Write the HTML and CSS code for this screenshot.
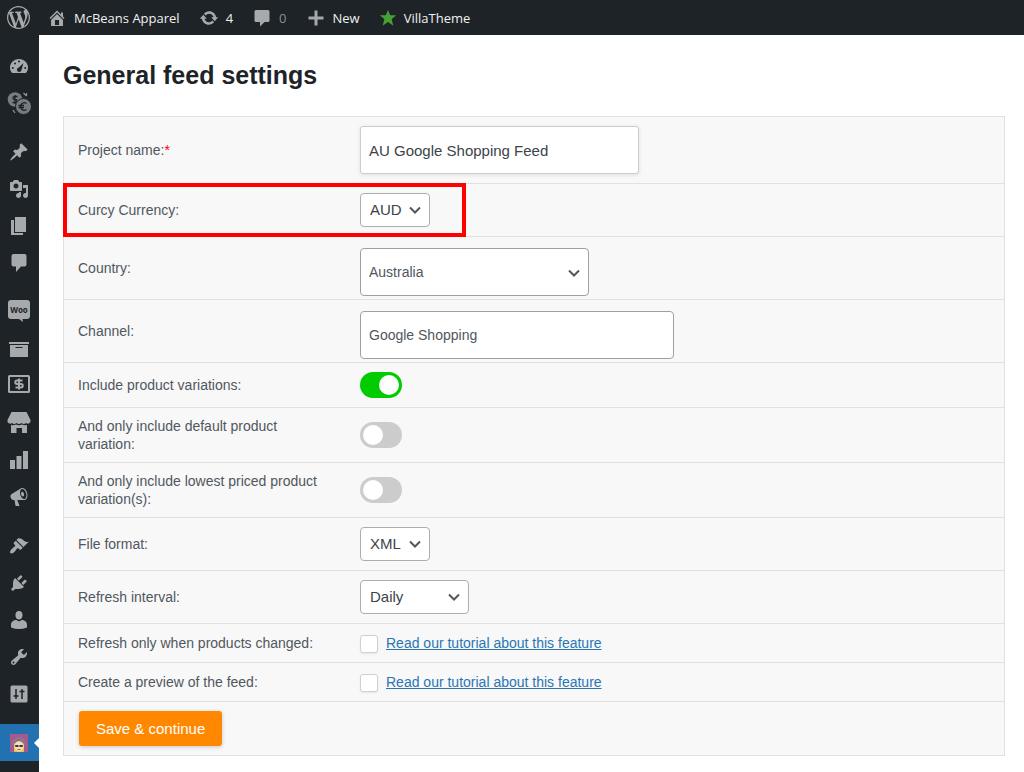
FILE: index.html
```html
<!DOCTYPE html>
<html lang="en">
<head>
<meta charset="utf-8">
<title>General feed settings</title>
<link rel="stylesheet" href="styles.css">
</head>
<body>
<header class="adminbar">
  <a class="bar-item bar-logo" href="#" aria-label="About WordPress"><svg class="logo" viewBox="0 0 20 20"><path d="M20 10c0-5.51-4.49-10-10-10C4.48 0 0 4.49 0 10c0 5.52 4.48 10 10 10 5.51 0 10-4.48 10-10zM7.78 15.37L4.37 6.22c.55-.02 1.17-.08 1.17-.08.5-.06.44-1.13-.06-1.11 0 0-1.45.11-2.37.11-.18 0-.37 0-.58-.01C4.12 2.69 6.87 1.11 10 1.11c2.33 0 4.45.87 6.05 2.34-.68-.11-1.65.39-1.65 1.58 0 .74.45 1.36.9 2.1.35.61.55 1.36.55 2.46 0 1.49-1.4 5-1.4 5l-3.03-8.37c.54-.02.82-.17.82-.17.5-.05.44-1.25-.06-1.22 0 0-1.44.12-2.38.12-.87 0-2.33-.12-2.33-.12-.5-.03-.56 1.2-.06 1.22l.92.08 1.26 3.41zM17.41 10c.24-.64.74-1.87.43-4.25.7 1.29 1.05 2.71 1.05 4.25 0 3.29-1.73 6.24-4.4 7.78.97-2.59 1.94-5.2 2.92-7.78zM6.1 18.09C3.12 16.65 1.11 13.53 1.11 10c0-1.3.23-2.48.72-3.59C3.25 10.3 4.67 14.2 6.1 18.09zm4.03-6.63l2.58 6.98c-.86.29-1.76.45-2.71.45-.79 0-1.57-.11-2.29-.33.81-2.38 1.62-4.74 2.42-7.1z"/></svg></a>
  <a class="bar-item" href="#"><svg viewBox="0 0 20 20"><path fill-rule="evenodd" d="M16 8.5l1.53 1.53-1.06 1.06L10 4.6l-6.47 6.49-1.06-1.06L10 2.5l4 4v-2h2v4zm-6-2.46l6 5.99V18H4v-5.97zM12 17v-5H8v5h4z"/></svg>McBeans Apparel</a>
  <a class="bar-item" href="#"><svg viewBox="0 0 20 20"><path d="M10.2 3.28c3.53 0 6.43 2.61 6.92 6h2.08l-3.5 4-3.5-4h2.32c-.45-1.97-2.21-3.45-4.32-3.45-1.45 0-2.73.71-3.54 1.78L4.95 5.66C6.23 4.2 8.11 3.28 10.2 3.28zm-.4 13.44c-3.52 0-6.43-2.61-6.92-6H.8l3.5-4c1.17 1.33 2.33 2.67 3.5 4H5.48c.45 1.97 2.21 3.45 4.32 3.45 1.45 0 2.73-.71 3.54-1.78l1.71 1.95c-1.28 1.46-3.15 2.38-5.25 2.38z"/></svg>4</a>
  <a class="bar-item bar-muted" href="#"><svg viewBox="0 0 20 20"><path d="M4 2h12q1.500 0 1.500 1.500v9q0 1.500-1.500 1.500h-3.500L8 18.500V14H4q-1.500 0-1.500-1.500v-9Q2.500 2 4 2z"/></svg>0</a>
  <a class="bar-item" href="#"><svg viewBox="0 0 20 20"><path d="M17.500 8.500v3h-6v6h-3v-6h-6v-3h6v-6h3v6z"/></svg>New</a>
  <a class="bar-item bar-star" href="#"><svg viewBox="0 0 20 20"><path d="M10 1l2.600 6H19l-5 4.400L16 18.500l-6-4-6 4 2-7.100L1 7h6.400z"/></svg>VillaTheme</a>
</header>
<div class="shell">
  <nav class="sidebar" aria-label="Main menu">
    <ul>
      <li><a href="#" aria-label="Dashboard"><svg viewBox="0 0 20 20"><path fill-rule="evenodd" d="M3.200 17h13.600c1.300-1.370 2.200-3.110 2.200-5.500 0-4.420-4-8.500-9-8.500s-9 4.080-9 8.500c0 2.390.9 4.130 2.200 5.500zM9 5.500a1 1 0 1 1 2 0 1 1 0 0 1-2 0zM5 7.500a1 1 0 1 1 2 0 1 1 0 0 1-2 0zM14.500 7l-2 7a2.300 2.300 0 1 1-2.700-2.500zM2.800 12a1 1 0 1 1 2 0 1 1 0 0 1-2 0zM15.200 12a1 1 0 1 1 2 0 1 1 0 0 1-2 0z"/></svg></a></li>
      <li><a class="dim" href="#" aria-label="Curcy"><svg class="wide" viewBox="0 0 24 24"><circle cx="8" cy="8.500" r="7.300"/><path d="M10.500 5.500H7.500a1.500 1.500 0 0 0 0 3h1a1.500 1.500 0 0 1 0 3H5.500M8 4v9" fill="none" stroke="#1d2327" stroke-width="1.300"/><circle cx="16.500" cy="15.500" r="8" stroke="#1d2327"/><path d="M19.500 12.500a3.700 3.700 0 1 0 0 6M11.500 14.500h5.500M11.500 16.500h5.500" fill="none" stroke="#1d2327" stroke-width="1.300"/><path d="M16.500 2l3 3M19.500 2v3M6 19l2 3" stroke="#8b9095" stroke-width="1.300"/></svg></a></li>
    </ul>
    <ul>
      <li><a href="#" aria-label="Posts"><svg viewBox="0 0 20 20"><path d="M10.440 3.020l1.820-1.820 6.360 6.350-1.830 1.820c-1.050-.68-2.480-.57-3.410.36l-.75.75c-.92.93-1.040 2.350-.35 3.410l-1.830 1.820-2.410-2.410-2.800 2.790c-.42.42-3.380 2.710-3.800 2.290s1.860-3.390 2.280-3.810l2.790-2.790L4.100 9.360l1.830-1.820c1.050.69 2.480.57 3.400-.36l.75-.75c.93-.92 1.050-2.350.36-3.410z"/></svg></a></li>
      <li><a href="#" aria-label="Media"><svg viewBox="0 0 20 20"><path fill-rule="evenodd" d="M13 11V4c0-.55-.45-1-1-1h-1.670L9 1H5L3.670 3H2c-.55 0-1 .45-1 1v7c0 .55.45 1 1 1h10c.55 0 1-.45 1-1zM7 4.500c1.380 0 2.500 1.120 2.500 2.500S8.380 9.500 7 9.500 4.500 8.380 4.500 7 5.620 4.500 7 4.500zM14 6h5v10.500c0 1.380-1.120 2.500-2.500 2.500S14 17.880 14 16.500s1.120-2.500 2.500-2.500c.17 0 .34.02.5.05V9h-3V6zm-4 8.050V13h2v3.500c0 1.380-1.120 2.500-2.500 2.500S7 17.880 7 16.500 8.120 14 9.500 14c.17 0 .34.02.5.05z"/></svg></a></li>
      <li><a href="#" aria-label="Pages"><svg viewBox="0 0 20 20"><path d="M6 16V1h11v15H6zm-1 1h9v2H2V4h3v13z"/></svg></a></li>
      <li><a href="#" aria-label="Comments"><svg viewBox="0 0 20 20"><path d="M4.500 1h11q2 0 2 2v8.500q0 2-2 2h-3.500l-5 5.500v-5.500H4.500q-2 0-2-2V3q0-2 2-2z"/></svg></a></li>
    </ul>
    <ul>
      <li><a href="#" aria-label="WooCommerce"><svg class="wide" viewBox="0 0 24 24"><path d="M4 0h16q3 0 3 3v13q0 3-3 3h-4.500l.5 3-4-3H4q-3 0-3-3V3q0-3 3-3z"/><text class="woo" x="12" y="13" text-anchor="middle">Woo</text></svg></a></li>
      <li><a href="#" aria-label="Products"><svg viewBox="0 0 20 20"><path fill-rule="evenodd" d="M20 3v2H0V3h20zM1 6h18v12H1V6zm12.500 3V8h-7v1h7z"/></svg></a></li>
      <li><a href="#" aria-label="Payments"><svg class="wide" viewBox="0 0 24 24"><path fill-rule="evenodd" d="M2.500 1h19q1.500 0 1.500 1.500v15q0 1.500-1.500 1.500h-19Q1 19 1 17.500v-15Q1 1 2.500 1zM3 3v14h18V3z"/><path d="M15.500 6.500h-5.500a1.700 1.700 0 0 0 0 3.500h4a1.700 1.700 0 0 1 0 3.500H8.500M12 4.500v11" fill="none" stroke="currentColor" stroke-width="2"/></svg></a></li>
      <li><a href="#" aria-label="Store"><svg class="wide" viewBox="0 0 24 24"><path d="M4.500 1h15L23.500 9v2q-2 3-4.500 1-2 2-4.500 0-2.500 2-5 0-2.500 2-4.500 0-2.500 2-4.500-1V9zM4 14q2.500.5 5-.5 3 1.500 6 0 2.500 1 5 .5v8h-5v-5H9.500v5H4z"/></svg></a></li>
      <li><a href="#" aria-label="Analytics"><svg viewBox="0 0 20 20"><path d="M19 19V1h-5v18h5zm-6.500 0V6h-5v13h5zM6 19v-9H1v9h5z"/></svg></a></li>
      <li><a href="#" aria-label="Marketing"><svg viewBox="0 0 20 20"><path fill-rule="evenodd" d="M18.150 5.940c.46 1.620.38 3.220-.02 4.480-.42 1.280-1.260 2.180-2.300 2.480-.16.06-.26.06-.4.06-.06.02-.12.02-.18.02-.06.02-.14.02-.22.02h-6.800l2.220 5.500c.02.14-.06.26-.14.34-.08.1-.24.16-.34.16H6.950c-.1 0-.26-.06-.34-.16-.08-.08-.16-.2-.14-.34l-1-5.500H4.250l-.02-.02c-.5.06-1.080-.18-1.540-.62s-.88-1.080-1.060-1.880c-.24-.8-.2-1.560-.02-2.200.18-.62.58-1.080 1.060-1.300l.02-.02 9-5.400c.1-.06.18-.1.24-.16.06-.04.14-.08.24-.12.16-.08.28-.12.5-.18 1.040-.3 2.240.1 3.220.98s1.840 2.240 2.260 3.860zm-2.580 5.980h-.02c.4-.1.74-.34 1.040-.7.58-.7.86-1.760.86-3.040 0-.64-.1-1.300-.28-1.980-.34-1.360-1.020-2.500-1.780-3.240s-1.680-1.100-2.460-.88c-.82.22-1.400.96-1.700 2-.32 1.040-.28 2.360.06 3.720.38 1.360 1 2.500 1.800 3.240.78.74 1.620 1.100 2.480.88zm-2.540-7.080c.22-.04.42-.02.62.04.38.16.76.48 1.020 1s.42 1.200.42 1.780c0 .3-.04.56-.12.8-.18.48-.44.84-.86.94-.34.1-.8-.06-1.140-.4s-.64-.86-.78-1.500c-.18-.62-.12-1.240.02-1.720s.48-.84.82-.94z"/></svg></a></li>
    </ul>
    <ul>
      <li><a href="#" aria-label="Appearance"><svg viewBox="0 0 20 20"><path d="M14.480 11.060L7.410 3.990l1.500-1.500c.5-.56 2.300-.47 3.510.32 1.210.8 1.430 1.280 2.910 2.100 1.180.64 2.450 1.260 4.450.85zm-.71.71L6.700 4.700 4.930 6.470c-.39.39-.39 1.020 0 1.410l1.060 1.060c.39.39.39 1.030 0 1.420-.6.6-1.430 1.110-2.210 1.690-.35.26-.7.53-1.010.84C1.430 14.230.4 16.080 1.400 17.070c.99 1 2.840-.03 4.180-1.360.31-.31.58-.66.85-1.020.57-.78 1.080-1.610 1.690-2.210.39-.39 1.020-.39 1.410 0l1.060 1.060c.39.39 1.020.39 1.410 0z"/></svg></a></li>
      <li><a href="#" aria-label="Plugins"><svg viewBox="0 0 20 20"><path d="M13.110 4.360L9.870 7.600 8 5.730l3.240-3.240c.35-.34 1.050-.2 1.560.32.52.51.66 1.210.31 1.550zm-8 1.770l.91-1.120 9.010 9.010-1.190.84c-.71.71-2.630 1.160-3.820 1.160H6.140L4.900 17.260c-.59.59-1.540.59-2.120 0-.59-.58-.59-1.530 0-2.120l1.240-1.240v-3.880c0-1.130.4-3.190 1.090-3.890zm7.260 3.970l3.240-3.240c.34-.35 1.040-.21 1.550.31.52.51.66 1.210.31 1.550l-3.240 3.250z"/></svg></a></li>
      <li><a href="#" aria-label="Users"><svg viewBox="0 0 20 20"><path d="M10 9.500C6.700 9.500 6.500 5.800 6.500 5.500 6.300 3 7.500 1 10 1s3.700 2 3.500 4.500c0 .3-.2 4-3.500 4zM7.500 10q2.500 2.500 5 0c3 0 5.500 2 5.500 4.500v3Q14 19 10 19t-8-1.500v-3C2 12 4.500 10 7.500 10z"/></svg></a></li>
      <li><a href="#" aria-label="Tools"><svg viewBox="0 0 20 20"><path fill-rule="evenodd" d="M16.680 9.770c-1.340 1.340-3.300 1.670-4.950.99l-5.410 6.520c-.99.99-2.590.99-3.580 0s-.99-2.590 0-3.570l6.520-5.420c-.68-1.650-.35-3.610.99-4.950 1.280-1.280 3.120-1.620 4.720-1.060l-2.890 2.890 2.820 2.820 2.860-2.870c.53 1.580.18 3.390-1.080 4.650zM3.810 16.210c.4.39 1.040.39 1.430 0 .4-.4.4-1.040 0-1.430-.39-.4-1.030-.4-1.430 0-.39.39-.39 1.030 0 1.430z"/></svg></a></li>
      <li><a href="#" aria-label="Settings"><svg viewBox="0 0 20 20"><path d="M3 1.500h14q1.500 0 1.500 1.500v14q0 1.500-1.500 1.500H3q-1.500 0-1.500-1.500V3Q1.500 1.500 3 1.500z"/><path d="M7 5v10M4.500 12h5M13 5v10M10.500 7.500h5" fill="none" stroke="#1d2327" stroke-width="1.500"/></svg></a></li>
    </ul>
    <ul>
      <li class="active"><a href="#" aria-label="Product Feed" aria-current="page"><svg viewBox="0 0 20 20"><path fill="#a9588f" d="M1 1h18v18H1z"/><path d="M4 12a6 7 0 0 1 12 0" fill="none" stroke="#7d7f91" stroke-width="2"/><path fill="#e8c34a" d="M5 19V11q5-6 10 0v8z"/><ellipse cx="10" cy="13.500" rx="4.500" ry="5" fill="#f1dfc4"/><path d="M6 12h3.500v2h-3zM10.500 12H14l-.5 2h-3z" fill="#3b3534"/><path d="M8.500 16.500h3" stroke="#b05050"/></svg></a></li>
    </ul>
  </nav>
  <main class="content">
    <h1>General feed settings</h1>
    <form class="settings">
      <div class="row">
        <label for="name">Project name:<span class="required">*</span></label>
        <div class="field"><input class="text-input" id="name" type="text" value="AU Google Shopping Feed"></div>
      </div>
      <div class="row highlighted">
        <label for="currency">Curcy Currency:</label>
        <div class="field"><span class="select w-code"><select id="currency"><option>AUD</option></select><svg viewBox="0 0 14 14"><path d="M2 4.500l5 5 5-5"/></svg></span></div>
      </div>
      <div class="row row-tight">
        <label for="country">Country:</label>
        <div class="field field-low"><span class="select big w-country"><select id="country"><option>Australia</option></select><svg viewBox="0 0 14 14"><path d="M2 5.500l5 5 5-5"/></svg></span></div>
      </div>
      <div class="row row-tight">
        <label for="channel">Channel:</label>
        <div class="field field-low"><span class="select big w-channel"><select id="channel"><option>Google Shopping</option></select></span></div>
      </div>
      <div class="row">
        <label for="variations">Include product variations:</label>
        <div class="field"><input class="toggle" id="variations" type="checkbox" checked></div>
      </div>
      <div class="row">
        <label for="default-only">And only include default product variation:</label>
        <div class="field"><input class="toggle" id="default-only" type="checkbox"></div>
      </div>
      <div class="row">
        <label for="lowest-only">And only include lowest priced product variation(s):</label>
        <div class="field"><input class="toggle" id="lowest-only" type="checkbox"></div>
      </div>
      <div class="row">
        <label for="format">File format:</label>
        <div class="field"><span class="select w-code"><select id="format"><option>XML</option></select><svg viewBox="0 0 14 14"><path d="M2 4.500l5 5 5-5"/></svg></span></div>
      </div>
      <div class="row">
        <label for="interval">Refresh interval:</label>
        <div class="field"><span class="select w-interval"><select id="interval"><option>Daily</option></select><svg viewBox="0 0 14 14"><path d="M2 4.500l5 5 5-5"/></svg></span></div>
      </div>
      <div class="row">
        <label for="changed">Refresh only when products changed:</label>
        <div class="field"><input class="check" id="changed" type="checkbox"><a href="#">Read our tutorial about this feature</a></div>
      </div>
      <div class="row">
        <label for="preview">Create a preview of the feed:</label>
        <div class="field"><input class="check" id="preview" type="checkbox"><a href="#">Read our tutorial about this feature</a></div>
      </div>
      <div class="row actions"><button class="save" type="submit">Save &amp; continue</button></div>
    </form>
  </main>
</div>
</body>
</html>
```
FILE: styles.css
```css
*, *::before, *::after { box-sizing: border-box; }

body {
  display: flex;
  flex-direction: column;
  min-height: 100vh;
  margin: 0;
  background: #fff;
  color: #50575e;
  font: 14px/18px "Liberation Sans", Arial, sans-serif;
}

svg { display: block; fill: currentColor; }

/* Admin bar */
.adminbar {
  display: flex;
  gap: 19px;
  height: 35px;
  padding: 0 7px;
  background: #1d2327;
  font: 13px/20px "Open Sans", "Noto Sans", sans-serif;
}

.bar-item {
  display: flex;
  align-items: center;
  gap: 7px;
  color: #f0f0f1;
  text-decoration: none;
  white-space: nowrap;
}

.bar-item svg { width: 20px; height: 20px; color: #a7aaad; }
.bar-item .logo { width: 23px; height: 23px; }
.bar-logo { margin-right: -2px; }
.bar-muted { color: #8c8f94; }
.bar-star svg { width: 18px; height: 18px; color: #46a034; }

/* Sidebar */
.shell { display: flex; flex: 1; }

.sidebar {
  display: flex;
  flex: none;
  flex-direction: column;
  gap: 12px;
  width: 39px;
  padding-top: 12px;
  background: #1d2327;
}

.sidebar ul { margin: 0; padding: 0; list-style: none; }
.sidebar li { position: relative; }

.sidebar a {
  display: flex;
  align-items: center;
  justify-content: center;
  height: 37px;
  padding-right: 2px;
  color: #a7aaad;
}

.sidebar .dim { color: #777c80; }
.sidebar svg { width: 20px; height: 20px; }
.sidebar .wide { width: 24px; height: 24px; }
.woo { fill: #1d2327; font: bold 8px "Open Sans", sans-serif; }
.active { background: #2271b1; }

.active::after {
  position: absolute;
  top: 14px;
  right: 0;
  border: 5px solid transparent;
  border-left: 0;
  border-right-color: #fff;
  content: "";
}

/* Settings form */
.content { flex: 1; min-width: 0; padding: 24px 19px 16px 24px; }

h1 {
  margin: 0 0 24px;
  color: #1d2327;
  font-size: 25px;
  line-height: 33px;
}

.settings { border: 1px solid #e1e1e1; background: #f8f8f8; }

.row {
  display: grid;
  grid-template-columns: 250px 1fr;
  column-gap: 32px;
  align-items: center;
  padding: 9px 14px;
  border-bottom: 1px solid #e1e1e1;
}

.row:last-child { border-bottom: 0; }
.row-tight { padding-block: 7px; }
.required { color: #f00; }
.field { display: flex; align-items: center; gap: 8px; }
.field-low { padding-top: 4px; margin-bottom: -4px; }

.highlighted { position: relative; }

.highlighted::after {
  position: absolute;
  inset: -1px auto -1px -1px;
  width: 403px;
  border: 4px solid #f00;
  content: "";
  pointer-events: none;
}

.text-input {
  width: 279px;
  height: 48px;
  padding: 0 8px;
  border: 1px solid #ccc;
  border-radius: 3px;
  background: #fff;
  box-shadow: 0 1px 4px rgba(0, 0, 0, .1);
  color: #3c434a;
  font: inherit;
  font-size: 15px;
}

.select { display: grid; align-items: center; }

.select select {
  grid-area: 1 / 1;
  width: 100%;
  height: 34px;
  padding: 0 9px;
  border: 1px solid #aaaeb2;
  border-radius: 4px;
  appearance: none;
  background: #fff;
  color: #3c434a;
  font: inherit;
  font-size: 15px;
}

.select.big select {
  height: 48px;
  padding: 0 8px;
  border-color: #98a2ad;
  color: #50575e;
  font-size: 14px;
}

.select svg {
  grid-area: 1 / 1;
  justify-self: end;
  width: 14px;
  height: 14px;
  margin-right: 8px;
  fill: none;
  stroke: #50575e;
  stroke-width: 2;
  pointer-events: none;
}

.w-code { width: 70px; }
.w-interval { width: 109px; }
.w-country { width: 229px; }
.w-channel { width: 314px; }

.toggle {
  display: flex;
  align-items: center;
  width: 42px;
  height: 26px;
  margin: 0;
  padding: 0 3px;
  border-radius: 13px;
  appearance: none;
  background: #ccc;
}

.toggle::before {
  width: 20px;
  height: 20px;
  border-radius: 50%;
  background: #fff;
  content: "";
}

.toggle:checked { justify-content: flex-end; background: #0c0; }

.check {
  width: 18px;
  height: 18px;
  margin: 2px 0 0;
  border: 1px solid #d0d0d0;
  border-radius: 3px;
  appearance: none;
  background: #fff;
  box-shadow: 0 1px 2px rgba(0, 0, 0, .08);
}

.field a { color: #2a76b4; }

.actions { grid-template-columns: auto; justify-content: start; padding: 9px 15px; }

.save {
  height: 35px;
  padding: 0 17px;
  border: 0;
  border-radius: 3px;
  background: #ff8800;
  box-shadow: 0 1px 4px rgba(0, 0, 0, .2);
  color: #fff;
  font: inherit;
  font-size: 15px;
}
```
